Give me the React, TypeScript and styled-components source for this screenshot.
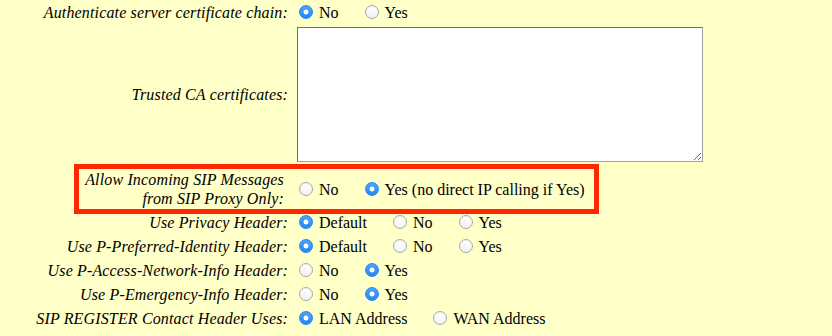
import React from 'react'
import styled, { createGlobalStyle, css } from 'styled-components'

const GlobalStyle = createGlobalStyle`
  html, body {
    margin: 0;
    padding: 0;
    background: #ffffc8;
  }
  body {
    font-family: 'Liberation Serif', 'Times New Roman', serif;
    font-size: 16px;
    color: #000;
  }
`

interface Choice {
  label: string
  checked?: boolean
}

interface Setting {
  label: React.ReactNode
  name: string
  choices: Choice[]
}

const privacySettings: Setting[] = [
  {
    label: 'Use Privacy Header:',
    name: 'privacy',
    choices: [{ label: 'Default', checked: true }, { label: 'No' }, { label: 'Yes' }]
  },
  {
    label: 'Use P-Preferred-Identity Header:',
    name: 'ppi',
    choices: [{ label: 'Default', checked: true }, { label: 'No' }, { label: 'Yes' }]
  },
  {
    label: 'Use P-Access-Network-Info Header:',
    name: 'pani',
    choices: [{ label: 'No' }, { label: 'Yes', checked: true }]
  },
  {
    label: 'Use P-Emergency-Info Header:',
    name: 'pemergency',
    choices: [{ label: 'No' }, { label: 'Yes', checked: true }]
  },
  {
    label: 'SIP REGISTER Contact Header Uses:',
    name: 'contact',
    choices: [{ label: 'LAN Address', checked: true }, { label: 'WAN Address' }]
  }
]

function RadioGroup({ name, choices }: { name: string; choices: Choice[] }) {
  return (
    <Options>
      {choices.map((c) => (
        <Option key={c.label}>
          <Radio type="radio" name={name} defaultChecked={c.checked} />
          <OptionText>{c.label}</OptionText>
        </Option>
      ))}
    </Options>
  )
}

export default function App() {
  return (
    <>
      <GlobalStyle />
      <Form>
        <Row>
          <Label>Authenticate server certificate chain:</Label>
          <RadioGroup
            name="authchain"
            choices={[{ label: 'No', checked: true }, { label: 'Yes' }]}
          />
        </Row>
        <Row $kind="text">
          <Label>Trusted CA certificates:</Label>
          <Value>
            <CertBox />
          </Value>
        </Row>
        <Row $kind="tall">
          {/* the wrapped label hangs a little further left, as in the original page */}
          <Label $wrapped>
            Allow Incoming SIP Messages
            <br />
            from SIP Proxy Only:
          </Label>
          <RadioGroup
            name="proxyonly"
            choices={[
              { label: 'No' },
              { label: 'Yes (no direct IP calling if Yes)', checked: true }
            ]}
          />
          <Highlight />
        </Row>
        {privacySettings.map((s) => (
          <Row key={s.name}>
            <Label>{s.label}</Label>
            <RadioGroup name={s.name} choices={s.choices} />
          </Row>
        ))}
      </Form>
    </>
  )
}

const Form = styled.div`
  display: flex;
  flex-direction: column;
  width: 832px;
  color: #000;
  font-family: 'Liberation Serif', serif;
  font-size: 16px;
`

const Row = styled.div<{ $kind?: 'text' | 'tall' }>`
  position: relative;
  display: grid;
  grid-template-columns: 294px 1fr;
  align-items: center;
  height: 24px;
  line-height: 19px;

  ${({ $kind }) =>
    $kind === 'text' &&
    css`
      height: auto;
      padding: 3px 0 6px;
    `}

  ${({ $kind }) =>
    $kind === 'tall' &&
    css`
      height: 42px;
    `}
`

const Label = styled.div<{ $wrapped?: boolean }>`
  font-family: 'Liberation Serif', serif;
  font-size: 16px;
  font-style: italic;
  letter-spacing: 0.15px;
  text-align: right;
  padding-right: ${({ $wrapped }) => ($wrapped ? '10px' : '6px')};
  white-space: nowrap;
`

const Value = styled.div`
  display: flex;
  align-items: center;
`

const Options = styled.div`
  display: flex;
  align-items: center;
  gap: 21px;
`

const Option = styled.label`
  display: inline-flex;
  align-items: center;
  gap: 6px;
  white-space: nowrap;
`

const OptionText = styled.span`
  font-family: 'Liberation Serif', serif;
  font-size: 16px;
`

const Radio = styled.input`
  appearance: none;
  box-sizing: border-box;
  width: 14px;
  height: 14px;
  margin: 0 0 0 5px;
  border-radius: 50%;
  border: 1px solid #a9a9a9;
  background: linear-gradient(#ffffff, #f1f1f1);
  box-shadow: inset 0 1px 1px rgba(0, 0, 0, 0.06);

  &:checked {
    border-color: #2b86f0;
    background: radial-gradient(circle, #fff 0 2.2px, transparent 2.8px),
      linear-gradient(#4aa5ff, #2487f5);
    box-shadow: none;
  }
`

const CertBox = styled.textarea`
  box-sizing: border-box;
  width: 406px;
  height: 135px;
  margin: 0 0 0 3px;
  border: 1px solid;
  border-color: #707070 #a0a0a0 #a0a0a0 #707070;
  background: #fff;
  font-family: 'Liberation Mono', monospace;
  font-size: 13px;
`

const Highlight = styled.span`
  position: absolute;
  top: -4px;
  left: 74px;
  width: 525px;
  height: 50px;
  box-sizing: border-box;
  border: 5px solid #ff2600;
  pointer-events: none;
`
